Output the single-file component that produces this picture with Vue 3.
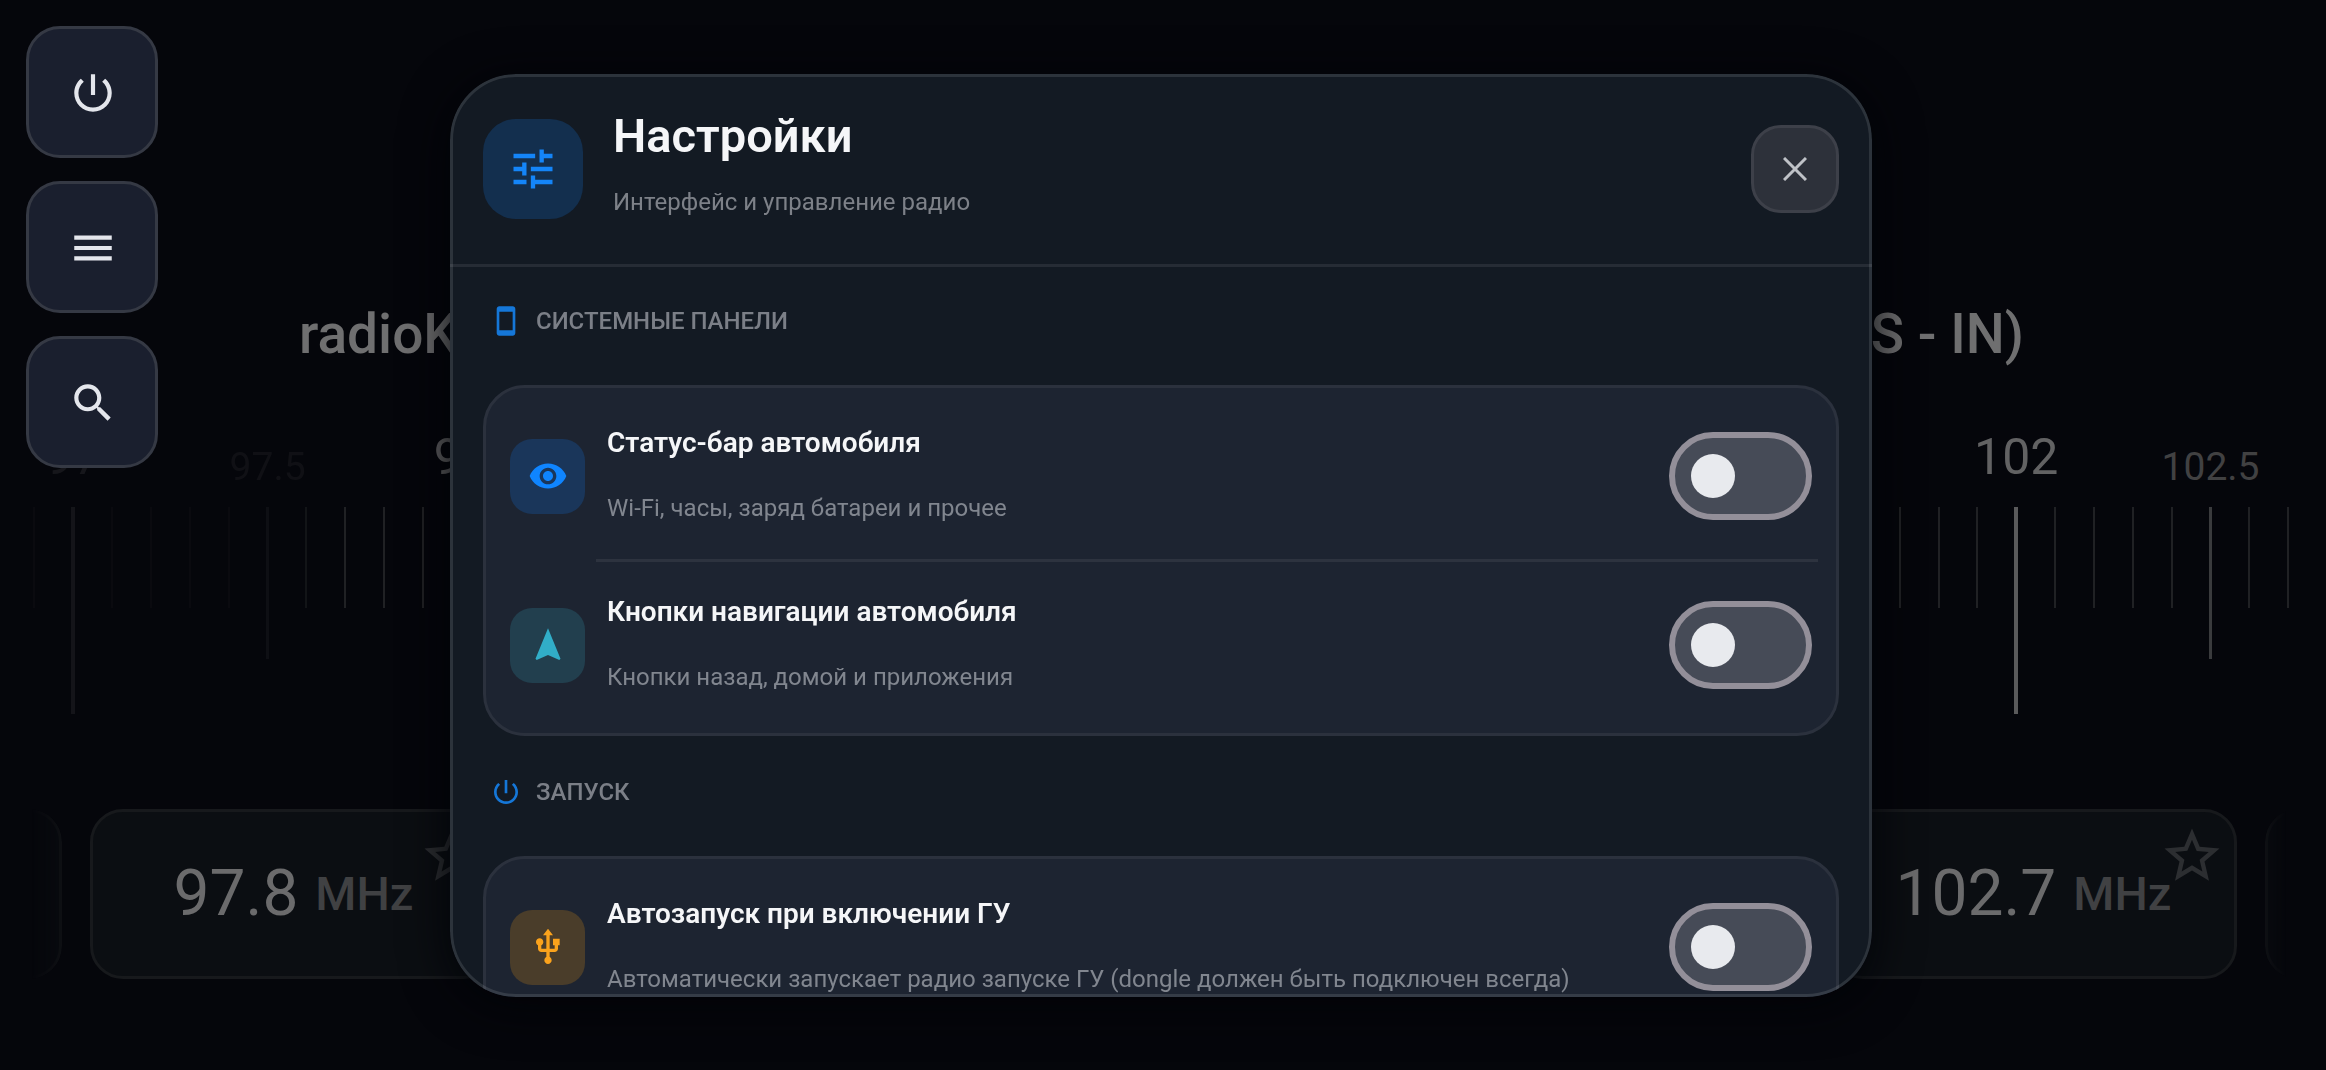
<script setup>
import { reactive } from 'vue'

const icons = {
  power: 'M13 3h-2v10h2V3zm4.83 2.17l-1.42 1.42C17.99 7.86 19 9.81 19 12c0 3.87-3.13 7-7 7s-7-3.13-7-7c0-2.19 1.01-4.14 2.58-5.42L6.17 5.17C4.23 6.82 3 9.26 3 12c0 4.97 4.03 9 9 9s9-4.03 9-9c0-2.74-1.23-5.18-3.17-6.83z',
  menu: 'M3 18h18v-2H3v2zm0-5h18v-2H3v2zm0-7v2h18V6H3z',
  search: 'M15.5 14h-.79l-.28-.27C15.41 12.59 16 11.11 16 9.5 16 5.91 13.09 3 9.5 3S3 5.91 3 9.5 5.91 16 9.5 16c1.61 0 3.09-.59 4.23-1.57l.27.28v.79l5 4.99L20.49 19l-4.99-5zm-6 0C7.01 14 5 11.99 5 9.5S7.01 5 9.5 5 14 7.01 14 9.5 11.99 14 9.5 14z',
  tune: 'M3 17v2h6v-2H3zM3 5v2h10V5H3zm10 16v-2h8v-2h-8v-2h-2v6h2zM7 9v2H3v2h4v2h2V9H7zm14 4v-2H11v2h10zm-6-4h2V7h4V5h-4V3h-2v6z',
  phone: 'M17 1.01L7 1c-1.1 0-1.99.9-1.99 2v18c0 1.1.89 2 1.99 2h10c1.1 0 2-.9 2-2V3c0-1.1-.9-1.99-2-1.99zM17 19H7V5h10v14z',
  eye: 'M12 4.5C7 4.5 2.73 7.61 1 12c1.73 4.39 6 7.5 11 7.5s9.27-3.11 11-7.5c-1.73-4.39-6-7.5-11-7.5zM12 17c-2.76 0-5-2.24-5-5s2.24-5 5-5 5 2.24 5 5-2.24 5-5 5zm0-8c-1.66 0-3 1.34-3 3s1.34 3 3 3 3-1.34 3-3-1.34-3-3-3z',
  arrow: 'M12 2L4.5 20.29l.71.71L12 18l6.79 3 .71-.71z',
  usb: 'M15 7v4h1v2h-3V5h2l-3-4-3 4h2v8H8v-2.07c.7-.37 1.2-1.08 1.2-1.93 0-1.21-.99-2.2-2.2-2.2-1.21 0-2.2.99-2.2 2.2 0 .85.5 1.56 1.2 1.93V13c0 1.11.89 2 2 2h3v3.05c-.71.37-1.2 1.1-1.2 1.95 0 1.22.99 2.2 2.2 2.2 1.21 0 2.2-.98 2.2-2.2 0-.85-.49-1.58-1.2-1.95V15h3c1.11 0 2-.89 2-2v-2h1V7h-4z',
  star: 'M22 9.24l-7.19-.62L12 2 9.19 8.63 2 9.24l5.46 4.73L5.82 21 12 17.27 18.18 21l-1.63-7.03L22 9.24zM12 15.4l-3.76 2.27 1-4.28-3.32-2.88 4.38-.38L12 6.1l1.71 4.04 4.38.38-3.32 2.88 1 4.28L12 15.4z',
}

const sideButtons = [
  { icon: 'power', label: 'Питание' },
  { icon: 'menu', label: 'Меню' },
  { icon: 'search', label: 'Поиск' },
]

// Dial from 96.9 to 102.7 MHz in steps of 0.1; the low end is dimmed.
const dialLabels = { 970: '97', 975: '97.5', 980: '98', 1020: '102', 1025: '102.5' }
const ticks = Array.from({ length: 59 }, (_, i) => {
  const f = 969 + i
  const kind = f % 10 === 0 ? 'major' : f % 5 === 0 ? 'mid' : 'minor'
  const dim = f < 976 ? 'dim' : f === 976 ? 'half' : ''
  return { f, kind, dim, label: dialLabels[f] }
})

const stations = ['97.8', '102.7']

const sections = reactive([
  {
    icon: 'phone',
    title: 'СИСТЕМНЫЕ ПАНЕЛИ',
    rows: [
      { id: 'status', icon: 'eye', tone: 'blue', title: 'Статус-бар автомобиля', text: 'Wi-Fi, часы, заряд батареи и прочее', on: false },
      { id: 'nav', icon: 'arrow', tone: 'teal', title: 'Кнопки навигации автомобиля', text: 'Кнопки назад, домой и приложения', on: false },
    ],
  },
  {
    icon: 'power',
    title: 'ЗАПУСК',
    rows: [
      { id: 'autostart', icon: 'usb', tone: 'amber', title: 'Автозапуск при включении ГУ', text: 'Автоматически запускает радио запуске ГУ (dongle должен быть подключен всегда)', on: false },
    ],
  },
])
</script>

<template>
  <div class="app">
    <main class="radio">
      <div class="station-name"><span>radioK</span><span>S - IN)</span></div>

      <div class="dial">
        <div v-for="t in ticks" :key="t.f" class="cell" :class="[t.kind, t.dim]">
          <span class="dial-label">{{ t.label }}</span>
          <i class="tick"></i>
        </div>
      </div>

      <div class="strip">
        <div class="peek peek-left"></div>
        <div v-for="s in stations" :key="s" class="station">
          <span class="freq">{{ s }}</span>
          <span class="unit">MHz</span>
          <svg class="star" viewBox="0 0 24 24"><path :d="icons.star" /></svg>
        </div>
        <div class="peek peek-right"></div>
      </div>
    </main>

    <nav class="side">
      <button v-for="b in sideButtons" :key="b.icon" type="button" class="side-btn" :aria-label="b.label">
        <svg viewBox="0 0 24 24"><path :d="icons[b.icon]" /></svg>
      </button>
    </nav>

    <div class="overlay">
      <section class="dialog" role="dialog" aria-labelledby="dialog-title">
        <header class="head">
          <div class="head-icon"><svg viewBox="0 0 24 24"><path :d="icons.tune" /></svg></div>
          <div class="head-text">
            <h1 id="dialog-title">Настройки</h1>
            <p>Интерфейс и управление радио</p>
          </div>
          <button type="button" class="close" aria-label="Закрыть">
            <svg viewBox="0 0 24 24"><path d="M1 1l22 22M23 1L1 23" /></svg>
          </button>
        </header>

        <div class="body">
          <template v-for="sec in sections" :key="sec.title">
            <h2 class="section-title">
              <svg viewBox="0 0 24 24"><path :d="icons[sec.icon]" /></svg>
              <span>{{ sec.title }}</span>
            </h2>
            <div class="card">
              <div v-for="row in sec.rows" :key="row.id" class="row">
                <div class="tile" :class="row.tone"><svg viewBox="0 0 24 24"><path :d="icons[row.icon]" /></svg></div>
                <label class="row-text" :for="row.id">
                  <span class="row-title">{{ row.title }}</span>
                  <span class="row-sub">{{ row.text }}</span>
                </label>
                <input :id="row.id" v-model="row.on" class="switch" type="checkbox" role="switch" />
              </div>
            </div>
          </template>
        </div>
      </section>
    </div>
  </div>
</template>

<style>
body {
  background: #05060b;
}
</style>

<style scoped>
* {
  box-sizing: border-box;
}

.app {
  min-height: 100vh;
  overflow: hidden;
  background: #05060b;
  font-family: Roboto, "Noto Sans", sans-serif;
  color: #f5f6f8;
}

svg {
  display: block;
  fill: currentColor;
}

button {
  padding: 0;
  font: inherit;
  cursor: pointer;
}

.radio {
  padding-top: 302px;
}

.station-name {
  display: flex;
  justify-content: space-between;
  padding: 0 302px 0 299px;
  font-size: 55px;
  font-weight: 500;
  line-height: 64px;
  color: #6f6f70;
}

.dial {
  display: flex;
  margin-top: 61px;
  padding: 0 18px 0 15px;
  height: 287px;
}

.cell {
  flex: 1 1 0;
  min-width: 0;
  display: flex;
  flex-direction: column;
  align-items: center;
}

.dial-label {
  height: 80px;
  flex: none;
  white-space: nowrap;
  font-size: 39px;
  line-height: 80px;
  color: #414142;
}

.major .dial-label {
  font-size: 50px;
  line-height: 60px;
  color: #626263;
}

.tick {
  width: 2px;
  height: 101px;
  background: #202124;
}

.mid .tick {
  width: 3px;
  height: 152px;
  background: #3a3b3d;
}

.major .tick {
  width: 4px;
  height: 207px;
  background: #5a5a5b;
}

.dim {
  opacity: 0.18;
}

.half {
  opacity: 0.5;
}

.strip {
  display: grid;
  grid-template-columns: 62px 407px 1fr 407px 61px;
  column-gap: 28px;
  margin-top: 95px;
}

.station,
.peek {
  height: 170px;
  border: 3px solid #17191c;
  background: #0b0e12;
}

.station {
  position: relative;
  display: flex;
  align-items: center;
  justify-content: center;
  gap: 17px;
  border-radius: 33px;
}

.station:nth-child(3) {
  grid-column: 4;
}

.peek-left {
  border-left: 0;
  border-radius: 0 33px 33px 0;
  mask-image: linear-gradient(to right, transparent 32px, #000 90px);
}

.peek-right {
  grid-column: 5;
  border-right: 0;
  border-radius: 33px 0 0 33px;
  mask-image: linear-gradient(to left, transparent 40px, #000 80px);
}

.freq {
  font-size: 64px;
  line-height: 80px;
  color: #6b6b6c;
}

.unit {
  font-size: 47px;
  font-weight: 500;
  line-height: 80px;
  color: #404143;
}

.star {
  position: absolute;
  top: 11px;
  right: 9px;
  width: 66px;
  color: #2c2e31;
}

.side {
  position: fixed;
  top: 26px;
  left: 26px;
  z-index: 2;
  display: flex;
  flex-direction: column;
  gap: 23px;
}

.side-btn {
  display: grid;
  place-items: center;
  width: 132px;
  height: 132px;
  padding: 2px 0 0 2px;
  border: 3px solid #353944;
  border-radius: 34px;
  background: #1a1f2e;
  color: #e4e6ec;
}

.side-btn svg {
  width: 50px;
}

.overlay {
  position: fixed;
  inset: 0;
  padding: 74px 454px 73px 450px;
}

.dialog {
  position: relative;
  display: flex;
  flex-direction: column;
  height: 100%;
  overflow: hidden;
  border-radius: 66px;
  background: #131a23;
  box-shadow: 0 8px 48px #020307;
}

/* The translucent outline lies over the scrolled content. */
.dialog::after {
  content: "";
  position: absolute;
  inset: 0;
  border: 3px solid rgba(255, 255, 255, 0.11);
  border-radius: inherit;
  pointer-events: none;
}

.head {
  display: flex;
  flex: none;
  align-items: center;
  gap: 30px;
  padding: 45px 33px;
  border-bottom: 3px solid #262c35;
}

.head-icon {
  display: grid;
  place-items: center;
  width: 100px;
  height: 100px;
  border-radius: 33px;
  background: #132f4e;
  color: #1485f8;
}

.head-icon svg {
  width: 52px;
}

.head-text {
  flex: 1;
  margin: -14px 0;
  padding-bottom: 2px;
}

h1,
h2,
p {
  margin: 0;
}

h1 {
  font-size: 47px;
  font-weight: 600;
  line-height: 60px;
}

.head-text p {
  margin-top: 8px;
  font-size: 24px;
  line-height: 56px;
  color: #7d8188;
}

.close {
  display: grid;
  place-items: center;
  width: 88px;
  height: 88px;
  border: 3px solid #3d4049;
  border-radius: 30px;
  background: #2d313a;
  color: #bfc2c7;
}

.close svg {
  width: 24px;
  fill: none;
  stroke: currentColor;
  stroke-width: 3;
}

.body {
  flex: 1;
  min-height: 0;
  overflow-y: auto;
  scrollbar-width: none;
  padding: 34px 33px;
}

.section-title {
  display: flex;
  align-items: center;
  gap: 14px;
  margin-bottom: 44px;
  padding-left: 7px;
  font-size: 24px;
  font-weight: 500;
  line-height: 40px;
  color: #7b7f87;
}

.section-title svg {
  width: 32px;
  color: #1577d8;
}

.card {
  margin-bottom: 36px;
  padding: 5px 0;
  border: 3px solid #2b313d;
  border-radius: 42px;
  background: #1d2431;
}

.row {
  position: relative;
  display: flex;
  align-items: center;
  gap: 22px;
  height: 166px;
  padding: 0 24px;
}

.row + .row {
  margin-top: 3px;
}

.row + .row::before {
  content: "";
  position: absolute;
  top: -3px;
  left: 110px;
  right: 18px;
  height: 3px;
  background: #2d333f;
}

.tile {
  display: grid;
  place-items: center;
  flex: none;
  width: 75px;
  height: 75px;
  border-radius: 22px;
}

.tile svg {
  width: 40px;
}

.blue {
  background: #1a365a;
  color: #0f85ff;
}

.teal {
  background: #223f4e;
  color: #31aec8;
}

.amber {
  background: #4a3d2a;
  color: #fba31c;
}

.row-text {
  flex: 1;
  min-width: 0;
  display: flex;
  flex-direction: column;
  gap: 25px;
  padding-bottom: 2px;
  line-height: 40px;
}

.row-title {
  font-size: 28px;
  font-weight: 600;
}

.row-sub {
  font-size: 24px;
  color: #81868f;
}

.switch {
  appearance: none;
  display: flex;
  align-items: center;
  flex: none;
  width: 143px;
  height: 88px;
  margin: 0;
  padding: 0 16px;
  border: 6px solid #938f99;
  border-radius: 44px;
  background: #464b57;
  cursor: pointer;
}

.switch::before {
  content: "";
  width: 44px;
  height: 44px;
  border-radius: 50%;
  background: #e8eaee;
}

.switch:checked {
  justify-content: flex-end;
  background: #0f85ff;
}
</style>
